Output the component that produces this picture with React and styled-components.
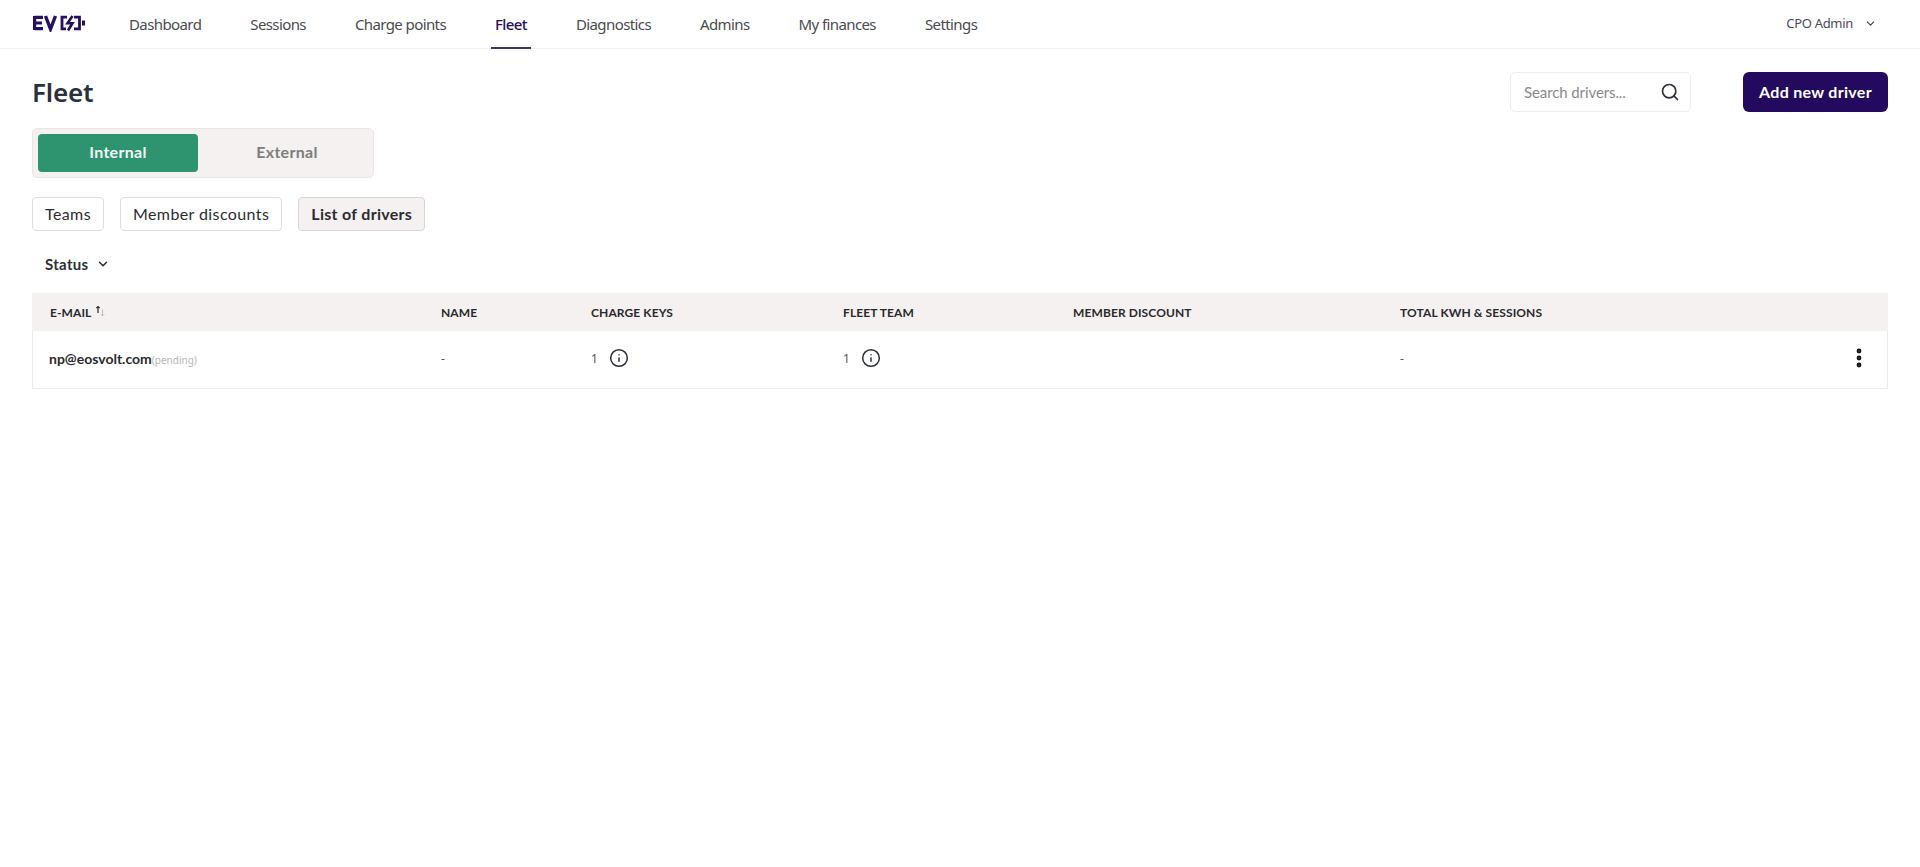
import React from "react";
import styled, { createGlobalStyle } from "styled-components";
import { ChevronDown, Search, Info, MoreVertical } from "lucide-react";

const Global = createGlobalStyle`
  html, body { margin: 0; padding: 0; background: #fff; }
  body { font-family: "Noto Sans", sans-serif; color: #2b2f38; }
  * { box-sizing: border-box; }
`;

const Page = styled.div`
  min-height: 867px;
  background: #fff;
`;

const TopBar = styled.header`
  height: 49px;
  display: flex;
  align-items: stretch;
  padding: 0 43px 0 33px;
  border-bottom: 1px solid #f1f0ef;
`;

const Logo = styled.svg`
  width: 53px;
  height: 18px;
  align-self: center;
  margin-top: -3px;
  flex: none;
`;

const Nav = styled.nav`
  display: flex;
  align-items: stretch;
  gap: 41px;
  margin-left: 39px;
`;

const NavItem = styled.a`
  position: relative;
  display: flex;
  align-items: center;
  padding: 0 4px 1px;
  font-family: "Noto Sans", sans-serif;
  font-size: 15px;
  letter-spacing: -0.6px;
  color: ${(p) => (p.$active ? "#24105e" : "#4a4a50")};
  font-weight: ${(p) => (p.$active ? 500 : 400)};
  white-space: nowrap;
  &::after {
    content: "";
    display: ${(p) => (p.$active ? "block" : "none")};
    position: absolute;
    left: 0;
    right: 0;
    bottom: -1px;
    height: 2px;
    background: #3f3560;
  }
`;

const UserMenu = styled.div`
  margin-left: auto;
  display: flex;
  align-items: center;
  gap: 11px;
  padding-bottom: 2px;
  font-size: 13px;
  letter-spacing: -0.3px;
  color: #4b4a5c;
`;

const Main = styled.main`
  padding: 23px 32px 0;
`;

const HeadRow = styled.div`
  display: flex;
  align-items: center;
  height: 40px;
`;

const Title = styled.h1`
  margin: 0;
  font-family: "Noto Sans", sans-serif;
  font-size: 26px;
  font-weight: 600;
  letter-spacing: -0.2px;
  color: #2b303a;
`;

const SearchBox = styled.div`
  margin-left: auto;
  width: 181px;
  height: 40px;
  display: flex;
  align-items: center;
  justify-content: space-between;
  padding: 0 10px 0 13px;
  border: 1px solid #ececec;
  border-radius: 5px;
  font-family: "Lato", sans-serif;
  font-size: 15px;
  letter-spacing: -0.1px;
  color: #8a8a8a;
`;

const PrimaryButton = styled.button`
  margin-left: 52px;
  width: 145px;
  height: 40px;
  border: 0;
  border-radius: 6px;
  padding: 0 0 2px;
  background: #230a5f;
  color: #fff;
  font-family: "Lato", sans-serif;
  font-size: 16px;
  font-weight: 700;
  letter-spacing: 0.3px;
`;

const Segment = styled.div`
  margin-top: 16px;
  width: 342px;
  height: 50px;
  display: flex;
  padding: 5px;
  background: #f4f1f0;
  border: 1px solid #e9e7e6;
  border-radius: 5px;
`;

const SegmentItem = styled.div`
  flex: ${(p) => (p.$active ? "0 0 160px" : "1")};
  display: flex;
  align-items: center;
  justify-content: center;
  padding: 0 0 3px ${(p) => (p.$active ? "0" : "8px")};
  border-radius: 4px;
  font-family: "Lato", sans-serif;
  font-size: 16px;
  font-weight: 700;
  letter-spacing: 0.3px;
  background: ${(p) => (p.$active ? "#2e9470" : "transparent")};
  color: ${(p) => (p.$active ? "#f2faf6" : "#7d7d7d")};
`;

const SubTabs = styled.div`
  margin-top: 19px;
  display: flex;
  gap: 16px;
`;

const SubTab = styled.div`
  height: 34px;
  display: flex;
  align-items: center;
  padding: 0 12px 1px;
  border: 1px solid ${(p) => (p.$active ? "#d8d6d5" : "#dfdedd")};
  border-radius: 4px;
  background: ${(p) => (p.$active ? "#f4f1f0" : "#fff")};
  font-family: "Lato", sans-serif;
  font-size: 16px;
  letter-spacing: ${(p) => (p.$active ? "0.3px" : "0.4px")};
  font-weight: ${(p) => (p.$active ? 700 : 400)};
  color: #2c2c30;
`;

const StatusFilter = styled.div`
  margin-top: 22px;
  padding-left: 13px;
  height: 22px;
  display: flex;
  align-items: center;
  gap: 8px;
  font-family: "Lato", sans-serif;
  font-size: 15px;
  font-weight: 700;
  letter-spacing: 0.3px;
  color: #2b2f38;
`;

const Table = styled.div`
  margin-top: 18px;
  border: 1px solid #ecebea;
  border-top: 0;
`;

const gridCols = "409px 150px 252px 230px 327px 1fr 60px";

const HeaderRow = styled.div`
  display: grid;
  grid-template-columns: ${gridCols};
  align-items: center;
  height: 38px;
  margin: 0 -1px;
  background: #f4f1f0;
`;

const HeaderCell = styled.div`
  display: flex;
  align-items: center;
  gap: 4px;
  padding-left: ${(p) => (p.$first ? "18px" : "0")};
  font-family: "Lato", sans-serif;
  font-size: 12px;
  font-weight: 700;
  color: #2a2a2e;
  letter-spacing: 0.1px;
`;

const BodyRow = styled.div`
  display: grid;
  grid-template-columns: ${gridCols};
  align-items: center;
  height: 57px;
  padding-bottom: 3px;
  margin-left: -1px;
`;

const Cell = styled.div`
  display: flex;
  align-items: center;
  font-family: "Noto Sans", sans-serif;
  font-size: 12px;
  color: #55555a;
`;

const EmailCell = styled(Cell)`
  padding-left: 17px;
  align-items: baseline;
`;

const Email = styled.span`
  font-family: "Lato", sans-serif;
  font-size: 14px;
  font-weight: 700;
  color: #2a2a2e;
`;

const Pending = styled.span`
  font-size: 10px;
  color: #b5b5b5;
`;

const CountCell = styled(Cell)`
  gap: 11px;
`;

const KebabCell = styled(Cell)`
  justify-content: flex-end;
  padding-right: 16px;
`;

const SortIcon = () => (
  <svg width="10" height="12" viewBox="0 0 10 12" fill="none" style={{ marginTop: -3 }}>
    <path d="M3 8V1.5M1.3 3.2 3 1.5l1.7 1.7" stroke="#2a2a2e" strokeWidth="1.2" />
    <path d="M7.5 4.5V11M5.9 9.4 7.5 11l1.6-1.6" stroke="#bcbcbc" strokeWidth="1" />
  </svg>
);

const navItems = ["Dashboard", "Sessions", "Charge points", "Fleet", "Diagnostics", "Admins", "My finances", "Settings"];

export default function App() {
  return (
    <Page>
      <Global />
      <TopBar>
        <Logo viewBox="0 0 53 18" fill="none">
          <path d="M1.6 3.4h8.4M1.6 9h7.4M1.6 14.6h8.4M1.6 2v14" stroke="#24105e" strokeWidth="3.2" />
          <path d="M12.5 2 17.5 15 22.5 2" stroke="#24105e" strokeWidth="3.4" />
          <path d="M34 3.2h-5v11.6h4M41 3.2h5.5v11.6H41" stroke="#24105e" strokeWidth="2.8" />
          <path d="M39.5 2 34.5 9.3h5L35 16.5" stroke="#24105e" strokeWidth="2.6" />
          <rect x="49" y="6.5" width="3" height="5" fill="#24105e" />
        </Logo>
        <Nav>
          {navItems.map((n) => (
            <NavItem key={n} $active={n === "Fleet"}>{n}</NavItem>
          ))}
        </Nav>
        <UserMenu>
          CPO Admin
          <ChevronDown size={13} strokeWidth={2} color="#3c3b4c" />
        </UserMenu>
      </TopBar>
      <Main>
        <HeadRow>
          <Title>Fleet</Title>
          <SearchBox>
            Search drivers...
            <Search size={20} color="#2b2f38" strokeWidth={2} />
          </SearchBox>
          <PrimaryButton>Add new driver</PrimaryButton>
        </HeadRow>
        <Segment>
          <SegmentItem $active>Internal</SegmentItem>
          <SegmentItem>External</SegmentItem>
        </Segment>
        <SubTabs>
          <SubTab>Teams</SubTab>
          <SubTab>Member discounts</SubTab>
          <SubTab $active>List of drivers</SubTab>
        </SubTabs>
        <StatusFilter>
          Status
          <ChevronDown size={14} strokeWidth={2.6} />
        </StatusFilter>
        <Table>
          <HeaderRow>
            <HeaderCell $first>E-MAIL <SortIcon /></HeaderCell>
            <HeaderCell>NAME</HeaderCell>
            <HeaderCell>CHARGE KEYS</HeaderCell>
            <HeaderCell>FLEET TEAM</HeaderCell>
            <HeaderCell>MEMBER DISCOUNT</HeaderCell>
            <HeaderCell>TOTAL KWH &amp; SESSIONS</HeaderCell>
            <HeaderCell />
          </HeaderRow>
          <BodyRow>
            <EmailCell>
              <Email>np@eosvolt.com</Email>
              <Pending>(pending)</Pending>
            </EmailCell>
            <Cell>-</Cell>
            <CountCell>1 <Info size={20} color="#2b2f38" strokeWidth={1.8} /></CountCell>
            <CountCell>1 <Info size={20} color="#2b2f38" strokeWidth={1.8} /></CountCell>
            <Cell />
            <Cell>-</Cell>
            <KebabCell><MoreVertical size={24} color="#111" strokeWidth={2.8} /></KebabCell>
          </BodyRow>
        </Table>
      </Main>
    </Page>
  );
}
